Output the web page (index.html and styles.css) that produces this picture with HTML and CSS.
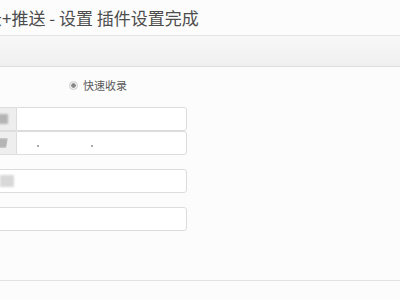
FILE: index.html
```html
<!DOCTYPE html>
<html lang="zh-CN">
<head>
  <meta charset="UTF-8">
  <title>插件设置</title>
  <link rel="stylesheet" href="styles.css">
</head>
<body>
  <h2 class="page-title">录+推送 - 设置 插件设置完成</h2>
  <div class="toolbar"></div>

  <div class="form">
    <div class="radio-row">
      <span class="radio"></span>
      <span class="radio-label">快速收录</span>
    </div>

    <div class="input-group">
      <span class="addon"><span class="mask"></span></span>
      <div class="input"></div>
    </div>
    <div class="input-group">
      <span class="addon"><span class="mask slant"></span></span>
      <div class="input"><span class="dot"></span><span class="dot"></span></div>
    </div>

    <div class="input-group spaced">
      <div class="input full"><span class="mask light"></span></div>
    </div>
    <div class="input-group spaced">
      <div class="input full"></div>
    </div>
  </div>

  <div class="footer-line"></div>
</body>
</html>
```

FILE: styles.css
```css
body {
  margin: 0;
  background-color: #fcfcfc;
  font-family: "Noto Sans CJK SC", "Noto Sans", sans-serif;
  color: #555;
  overflow: hidden;
}
.page-title {
  margin: 0 0 0 -15px;
  padding-top: 6px;
  font-size: 17px;
  font-weight: normal;
  line-height: 24px;
  color: #4d4d4d;
  white-space: nowrap;
}
.toolbar {
  margin-top: 5px;
  height: 30px;
  border-top: 1px solid #e6e6e6;
  border-bottom: 1px solid #dedede;
  background: linear-gradient(#f8f8f8, #efefef);
}
.form {
  margin-left: -60px;
  width: 247px;
}
.radio-row {
  display: flex;
  align-items: center;
  height: 20px;
  margin-top: 8px;
  padding-left: 129px;
  gap: 5px;
}
.radio {
  width: 7px;
  height: 7px;
  border-radius: 50%;
  border: 1px solid #ccc;
  background: radial-gradient(circle, #888 0 2px, #f4f4f4 2.5px);
}
.radio-label {
  font-size: 11px;
  color: #5a5a5a;
}
.input-group {
  display: flex;
  height: 24px;
}
.radio-row + .input-group {
  margin-top: 12px;
}
.input-group.spaced {
  margin-top: 14px;
}
.addon {
  width: 76px;
  box-sizing: border-box;
  background-color: #eee;
  border: 1px solid #ddd;
  border-right: none;
  border-radius: 3px 0 0 3px;
  display: flex;
  align-items: center;
  justify-content: flex-end;
  padding-right: 8px;
}
.input {
  flex: 1;
  box-sizing: border-box;
  border: 1px solid #dcdcdc;
  border-radius: 0 3px 3px 0;
  background-color: #fff;
  display: flex;
  align-items: flex-end;
  padding: 0 0 7px 20px;
  gap: 52px;
}
.input.full {
  border-radius: 3px;
  align-items: center;
  padding: 0 0 0 59px;
}
.mask {
  display: block;
  width: 10px;
  height: 10px;
  background-color: #b4b4b4;
  filter: blur(1px);
}
.mask.slant {
  clip-path: polygon(0 0, 100% 0, 80% 100%, 0 100%);
}
.mask.light {
  width: 14px;
  height: 12px;
  background-color: #d8d8d8;
}
.dot {
  width: 2px;
  height: 2px;
  background-color: #aaa;
}
.footer-line {
  margin-top: 49px;
  border-top: 1px solid #e2e2e2;
}
```
